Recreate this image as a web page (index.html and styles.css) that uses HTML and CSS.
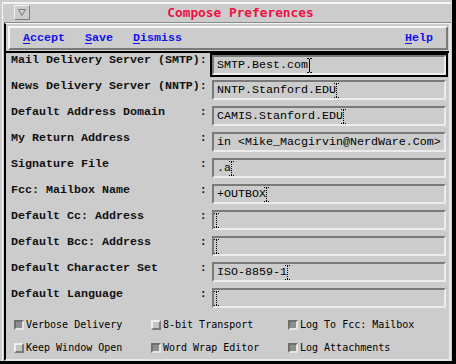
FILE: index.html
```html
<!DOCTYPE html>
<html>

<head>
    <title>Compose Preferences</title>
    <link rel="stylesheet" href="styles.css">
</head>

<body>

    <div class="frame">
        <div class="titlebar">
            <div class="menu-btn">
                <svg width="8" height="7" viewBox="0 0 8 7"><path d="M0.5 0.5h7L4 6.5z" fill="none" stroke="#7c7c7c"/></svg>
            </div>
            <div class="title">Compose Preferences</div>
        </div>

        <div class="client">
            <div class="menubar">
                <span class="menu-item"><u>A</u>ccept</span>
                <span class="menu-item"><u>S</u>ave</span>
                <span class="menu-item"><u>D</u>ismiss</span>
                <span class="spacer"></span>
                <span class="menu-item"><u>H</u>elp</span>
            </div>

            <div class="form">
                <div class="row">
                    <div class="label">Mail Delivery Server (SMTP):</div>
                    <div class="field focused">SMTP.Best.com<svg class="caret" width="5" height="15" viewBox="0 0 5 15"><path d="M0 .5h2M3 .5h2M2.5 1v13M0 14.5h2M3 14.5h2" stroke="#000"/></svg></div>
                </div>
                <div class="row">
                    <div class="label">News Delivery Server (NNTP):</div>
                    <div class="field">NNTP.Stanford.EDU<svg class="ibeam" width="5" height="15" viewBox="0 0 5 15"><path d="M0 .5h5M2.5 1v13M0 14.5h5" stroke="#000" stroke-dasharray="1 1"/></svg></div>
                </div>
                <div class="row">
                    <div class="label">Default Address Domain     :</div>
                    <div class="field">CAMIS.Stanford.EDU<svg class="ibeam" width="5" height="15" viewBox="0 0 5 15"><path d="M0 .5h5M2.5 1v13M0 14.5h5" stroke="#000" stroke-dasharray="1 1"/></svg></div>
                </div>
                <div class="row">
                    <div class="label">My Return Address          :</div>
                    <div class="field">in &lt;Mike_Macgirvin@NerdWare.Com&gt;</div>
                </div>
                <div class="row">
                    <div class="label">Signature File             :</div>
                    <div class="field">.a<svg class="ibeam" width="5" height="15" viewBox="0 0 5 15"><path d="M0 .5h5M2.5 1v13M0 14.5h5" stroke="#000" stroke-dasharray="1 1"/></svg></div>
                </div>
                <div class="row">
                    <div class="label">Fcc: Mailbox Name          :</div>
                    <div class="field">+OUTBOX<svg class="ibeam" width="5" height="15" viewBox="0 0 5 15"><path d="M0 .5h5M2.5 1v13M0 14.5h5" stroke="#000" stroke-dasharray="1 1"/></svg></div>
                </div>
                <div class="row">
                    <div class="label">Default Cc: Address        :</div>
                    <div class="field empty"><svg class="ibeam" width="5" height="15" viewBox="0 0 5 15"><path d="M0 .5h5M2.5 1v13M0 14.5h5" stroke="#000" stroke-dasharray="1 1"/></svg></div>
                </div>
                <div class="row">
                    <div class="label">Default Bcc: Address       :</div>
                    <div class="field empty"><svg class="ibeam" width="5" height="15" viewBox="0 0 5 15"><path d="M0 .5h5M2.5 1v13M0 14.5h5" stroke="#000" stroke-dasharray="1 1"/></svg></div>
                </div>
                <div class="row">
                    <div class="label">Default Character Set      :</div>
                    <div class="field">ISO-8859-1<svg class="ibeam" width="5" height="15" viewBox="0 0 5 15"><path d="M0 .5h5M2.5 1v13M0 14.5h5" stroke="#000" stroke-dasharray="1 1"/></svg></div>
                </div>
                <div class="row">
                    <div class="label">Default Language           :</div>
                    <div class="field empty"><svg class="ibeam" width="5" height="15" viewBox="0 0 5 15"><path d="M0 .5h5M2.5 1v13M0 14.5h5" stroke="#000" stroke-dasharray="1 1"/></svg></div>
                </div>
            </div>

            <div class="options">
                <div class="option"><span class="check on"></span>Verbose Delivery</div>
                <div class="option"><span class="check"></span>8-bit Transport</div>
                <div class="option"><span class="check on"></span>Log To Fcc: Mailbox</div>
                <div class="option"><span class="check"></span>Keep Window Open</div>
                <div class="option"><span class="check on"></span>Word Wrap Editor</div>
                <div class="option"><span class="check on"></span>Log Attachments</div>
            </div>
        </div>
    </div>

</body>
</html>
```

FILE: styles.css
```css
body {
    margin: 0;
    background: #cccccc;
}
.frame {
    width: 456px;
    height: 364px;
    box-sizing: border-box;
    padding: 3px 5px 3px 4px;
    background: #cccccc;
    box-shadow: inset -4px -3px 0 #000, inset 2px 2px 0 #cccccc, inset 3px 3px 0 #f4f4f4;
    display: flex;
    flex-direction: column;
}
.titlebar {
    height: 20px;
    border-top: 1px solid #f4f4f4;
    border-bottom: 1px solid #8a8a8a;
    display: flex;
    align-items: flex-start;
}
.menu-btn {
    width: 16px;
    height: 15px;
    box-sizing: border-box;
    margin: 1px 0 0 10px;
    border: 1px solid;
    border-color: #f4f4f4 #7c7c7c #7c7c7c #f4f4f4;
    display: flex;
    align-items: center;
    justify-content: center;
}
.title {
    flex: 1;
    padding-top: 1px;
    text-align: center;
    line-height: 15px;
    font-family: "DejaVu Sans Mono", monospace;
    font-weight: bold;
    font-size: 12.8px;
    color: #ee1144;
}
.client {
    flex: 1;
    border-top: 1px solid #f4f4f4;
    border-left: 2px solid #000;
    border-right: 2px solid #e8e8e8;
    border-bottom: 2px solid #e8e8e8;
    display: flex;
    flex-direction: column;
}
.menubar {
    height: 24px;
    box-sizing: border-box;
    margin: 2px 1px 0 2px;
    padding: 0 3px;
    border: 2px solid;
    border-color: #f4f4f4 #7a7a7a #7a7a7a #f4f4f4;
    display: flex;
    align-items: center;
}
.menu-item {
    padding: 0 10px;
    font-family: "Liberation Mono", monospace;
    font-weight: bold;
    font-size: 11.67px;
    color: #1010f0;
}
.menu-item u {
    text-underline-offset: 2px;
}
.spacer {
    flex: 1;
}
.form {
    margin-top: 1px;
    border-top: 2px solid #000;
}
.row {
    height: 26px;
    display: flex;
    align-items: flex-start;
}
.label {
    width: 196px;
    margin-left: 5px;
    line-height: 14px;
    white-space: pre;
    font-family: "Liberation Mono", monospace;
    font-weight: bold;
    font-size: 11.67px;
    color: #111;
}
.field {
    width: 234px;
    height: 20px;
    box-sizing: border-box;
    margin: 1px 0 0 5px;
    padding-left: 3px;
    border: 2px solid;
    border-color: #7a7a7a #ececec #ececec #7a7a7a;
    display: flex;
    align-items: center;
    white-space: pre;
    overflow: hidden;
    font-family: "Liberation Mono", monospace;
    font-size: 11.67px;
    color: #000;
}
.field.empty {
    padding-left: 0;
}
.focused {
    box-shadow: 0 0 0 2px #000;
    margin-top: 2px;
}
.ibeam {
    flex: none;
    margin-left: -2px;
}
.empty .ibeam {
    margin-left: 0;
}
.caret {
    flex: none;
    margin-left: -1px;
}
.options {
    display: grid;
    grid-template-columns: 137px 137px 1fr;
    grid-auto-rows: 23px;
    padding-left: 8px;
}
.option {
    display: flex;
    align-items: center;
    font-family: "DejaVu Sans Mono", monospace;
    font-size: 10px;
    color: #000;
}
.check {
    width: 10px;
    height: 10px;
    box-sizing: border-box;
    margin-right: 2px;
    border: 2px solid;
    border-color: #eeeeee #7a7a7a #7a7a7a #eeeeee;
    background: #c4c4c4;
}
.check.on {
    border-color: #6e6e6e #e4e4e4 #e4e4e4 #6e6e6e;
    background: #8e8e8e;
}
```
